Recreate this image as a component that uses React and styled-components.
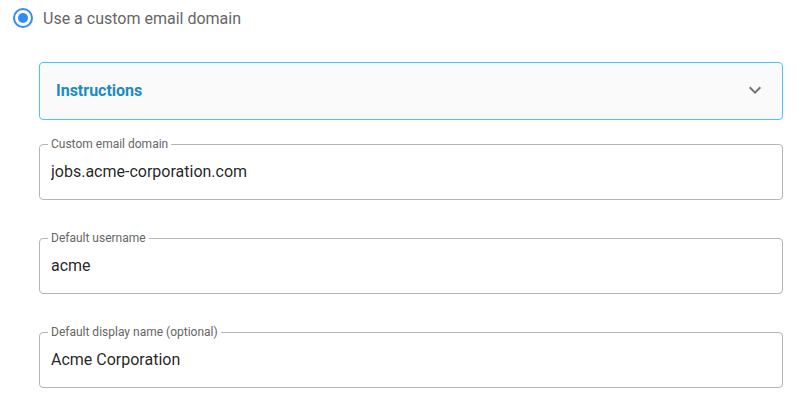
import React from "react";
import styled, { createGlobalStyle } from "styled-components";

const Global = createGlobalStyle`
  html, body { margin: 0; padding: 0; background: #ffffff; }
  body { font-family: Roboto, "Liberation Sans", Arial, sans-serif; }
  * { box-sizing: border-box; }
`;

const Page = styled.div`
  width: 801px;
  height: 400px;
  overflow: hidden;
  background: #fff;
`;

const RadioRow = styled.label`
  display: flex;
  align-items: center;
  gap: 10px;
  height: 20px;
  margin: 8px 0 0 13px;
  cursor: pointer;
`;

const RadioIcon = styled.span`
  width: 20px;
  height: 20px;
  border-radius: 50%;
  border: 2px solid #2f8cf2;
  display: flex;
  align-items: center;
  justify-content: center;
  &::after {
    content: "";
    width: 10px;
    height: 10px;
    border-radius: 50%;
    background: #2f8cf2;
  }
`;

const RadioText = styled.span`
  font-size: 16px;
  line-height: 19px;
  color: #666666;
`;

const Content = styled.div`
  margin: 34px 0 0 39px;
  width: 744px;
  display: flex;
  flex-direction: column;
`;

const Accordion = styled.div`
  height: 58px;
  border: 1px solid #4fc3f7;
  border-radius: 4px;
  background: #fafafa;
  display: flex;
  align-items: center;
  justify-content: space-between;
  padding: 0 15px 2px 16px;
`;

const AccordionTitle = styled.span`
  font-size: 16px;
  font-weight: 700;
  color: #1b8cc0;
  line-height: 19px;
`;

const Field = styled.fieldset`
  margin: ${(p) => (p.$first ? "18px" : "32px")} 0 0 0;
  padding: 0 8px;
  border: 1px solid #b5b5b5;
  border-radius: 4px;
  min-width: 0;
`;

const Legend = styled.legend`
  font-size: 12px;
  line-height: 12px;
  color: #666666;
  padding: 0 3px;
`;

const Input = styled.input`
  display: block;
  width: 100%;
  border: none;
  outline: none;
  background: transparent;
  font-family: Roboto, "Liberation Sans", Arial, sans-serif;
  font-size: 16px;
  line-height: 19px;
  height: 49px;
  padding: 12px 3px 18px 3px;
  color: rgba(0, 0, 0, 0.87);
`;

const Chevron = () => (
  <svg width="24" height="24" viewBox="0 0 24 24" aria-hidden="true">
    <path
      d="M16.59 8.59 12 13.17 7.41 8.59 6 10l6 6 6-6z"
      fill="#757575"
    />
  </svg>
);

const fields = [
  { label: "Custom email domain", value: "jobs.acme-corporation.com" },
  { label: "Default username", value: "acme" },
  { label: "Default display name (optional)", value: "Acme Corporation" },
];

export default function App() {
  return (
    <Page>
      <Global />
      <RadioRow>
        <RadioIcon />
        <RadioText>Use a custom email domain</RadioText>
      </RadioRow>
      <Content>
        <Accordion>
          <AccordionTitle>Instructions</AccordionTitle>
          <Chevron />
        </Accordion>
        {fields.map((f, i) => (
          <Field key={f.label} $first={i === 0}>
            <Legend>{f.label}</Legend>
            <Input readOnly value={f.value} />
          </Field>
        ))}
      </Content>
    </Page>
  );
}
